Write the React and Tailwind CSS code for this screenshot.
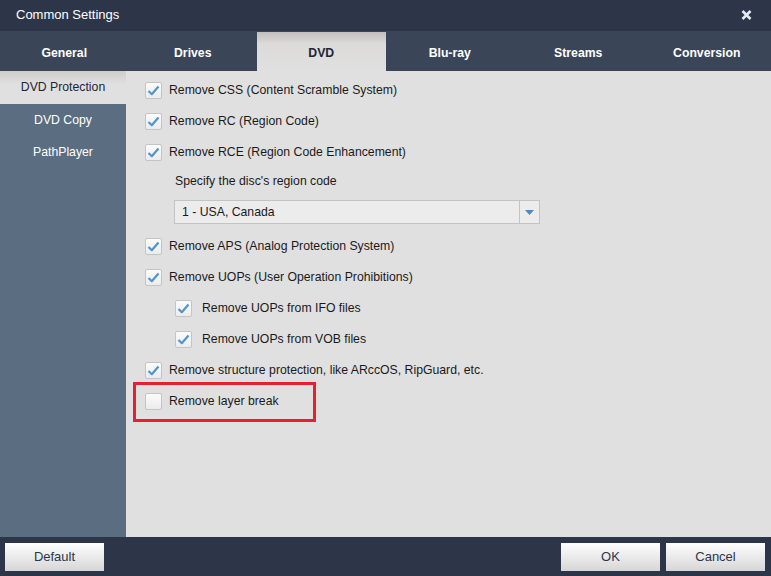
import { useState } from 'react'

const TABS = ['General', 'Drives', 'DVD', 'Blu-ray', 'Streams', 'Conversion']
const SIDE = ['DVD Protection', 'DVD Copy', 'PathPlayer']

function Check({ checked }) {
  return (
    <span className="flex h-[17px] w-[17px] shrink-0 items-center justify-center rounded-[2px] border border-[#c4c4c4] bg-gradient-to-b from-[#fbfbfb] to-[#ececec]">
      {checked && (
        <svg width="13" height="11" viewBox="0 0 13 11">
          <path d="M1.5 6 L4.8 9.2 L11.5 1.5" fill="none" stroke="#4f95d0" strokeWidth="2.2" strokeLinejoin="round" />
        </svg>
      )}
    </span>
  )
}

function Row({ label, checked = true, indent = false, flush = false }) {
  const [on, setOn] = useState(checked)
  const pad = flush ? 'pl-0' : indent ? 'pl-[49px]' : 'pl-[19px]'
  return (
    <label className={`flex h-[31px] cursor-default items-center ${pad}`} onClick={() => setOn(!on)}>
      <Check checked={on} />
      <span className={`${indent ? 'ml-[10px]' : 'ml-[7px]'} text-[12.25px] text-[#1a1a1a]`}>{label}</span>
    </label>
  )
}

export default function App() {
  const active = 'DVD'
  return (
    <div className="flex h-[576px] w-[771px] flex-col bg-[#2c3648] font-['Liberation_Sans',Arial,sans-serif]">
      <div className="flex h-[31px] items-center justify-between pb-[2px] pl-[16px] pr-[19px]">
        <span className="text-[13px] text-white">Common Settings</span>
        <svg width="11" height="10" viewBox="0 0 11 10">
          <path d="M1.5 1 L9.5 9 M9.5 1 L1.5 9" stroke="#e6ecf4" strokeWidth="2.6" />
        </svg>
      </div>

      <div className="grid h-[40px] grid-cols-6 bg-[#3a4657]">
        {TABS.map((t) =>
          t === active ? (
            <div
              key={t}
              className="mt-[1px] flex items-center justify-center bg-gradient-to-b from-[#c2bfbd] via-[#dcdbda] via-30% to-[#e0e0e0] pt-[4px] text-[12.25px] font-bold text-[#1d2536]"
            >
              {t}
            </div>
          ) : (
            <div key={t} className="flex items-center justify-center pt-[5px] text-[12.25px] font-bold text-white">
              {t}
            </div>
          )
        )}
      </div>

      <div className="flex flex-1">
        <div className="w-[126px] bg-[#5b6d81]">
          {SIDE.map((s, i) =>
            i === 0 ? (
              <div
                key={s}
                className="flex h-[33px] items-center justify-center bg-gradient-to-b from-[#cfcdcb] via-[#e0e0e0] via-40% to-[#e0e0e0] text-[12.25px] text-[#1d2536]"
              >
                {s}
              </div>
            ) : (
              <div key={s} className="flex h-[32px] items-center justify-center text-[12.25px] text-white">
                {s}
              </div>
            )
          )}
        </div>

        <div className="flex-1 bg-[#e0e0e0] pt-[4px]">
          <Row label="Remove CSS (Content Scramble System)" />
          <Row label="Remove RC (Region Code)" />
          <Row label="Remove RCE (Region Code Enhancement)" />
          <div className="h-[32px] pl-[49px] pt-[4px] text-[12.25px] text-[#1a1a1a]">
            Specify the disc&apos;s region code
          </div>
          <div className="h-[31px] pl-[48px]">
            <div className="flex h-[24px] w-[366px] border border-[#c3c3c3] bg-[#ececec]">
              <span className="flex flex-1 items-center pl-[7px] text-[12.25px] text-[#1a1a1a]">1 - USA, Canada</span>
              <span className="flex w-[20px] items-center justify-center border-l border-[#c3c3c3]">
                <svg width="9" height="5" viewBox="0 0 9 5">
                  <path d="M0 0 H9 L4.5 5 Z" fill="#4b8ac4" />
                </svg>
              </span>
            </div>
          </div>
          <Row label="Remove APS (Analog Protection System)" />
          <Row label="Remove UOPs (User Operation Prohibitions)" />
          <Row label="Remove UOPs from IFO files" indent />
          <Row label="Remove UOPs from VOB files" indent />
          <Row label="Remove structure protection, like ARccOS, RipGuard, etc." />
          <div className="-mt-[4px] ml-[7px] w-[183px] border-[3px] border-[#e8202a] pb-[2px] pl-[9px] pt-[1px]">
            <Row label="Remove layer break" checked={false} flush />
          </div>
        </div>
      </div>

      <div className="flex h-[39px] items-center justify-between pl-[5px] pr-[6px]">
        <button className="h-[28px] w-[99px] bg-gradient-to-b from-white to-[#d6d6d6] text-[13px] text-[#2c3648]">
          Default
        </button>
        <div className="flex gap-[6px]">
          <button className="h-[28px] w-[99px] bg-gradient-to-b from-white to-[#d6d6d6] text-[13px] text-[#2c3648]">
            OK
          </button>
          <button className="h-[28px] w-[99px] bg-gradient-to-b from-white to-[#d6d6d6] text-[13px] text-[#2c3648]">
            Cancel
          </button>
        </div>
      </div>
    </div>
  )
}
